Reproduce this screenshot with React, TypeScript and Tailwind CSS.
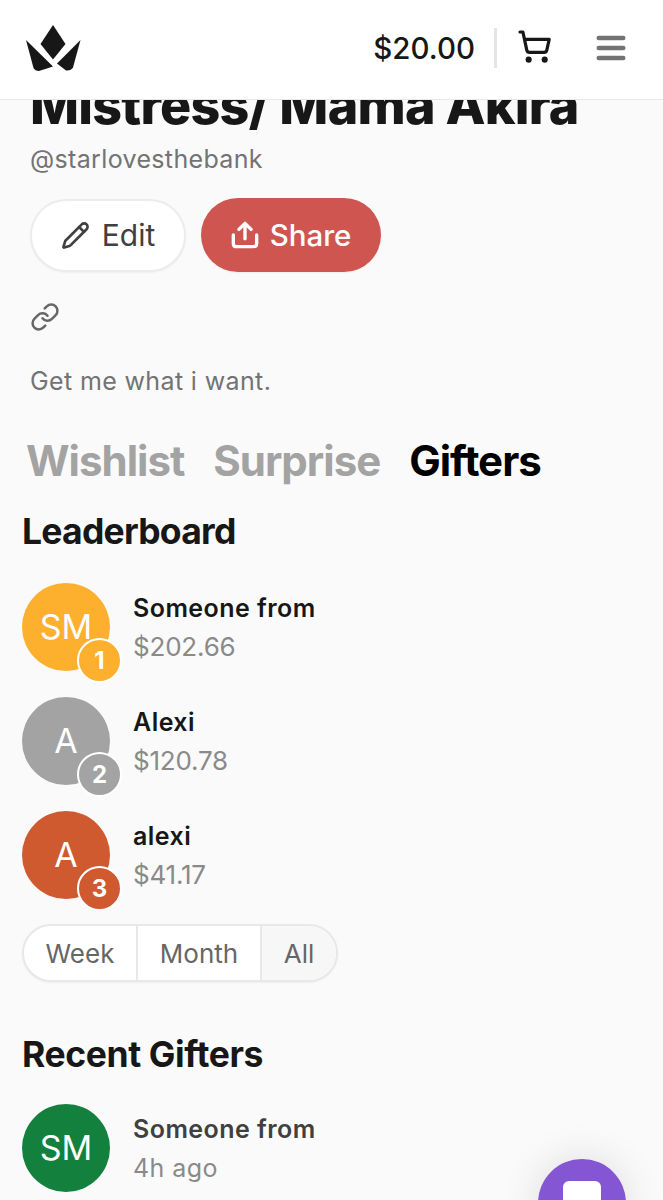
import { Link, Pencil, ShoppingCart } from "lucide-react";

const leaders = [
  { initials: "SM", name: "Someone from", amount: "$202.66", rank: 1, color: "bg-[#fdb02d]" },
  { initials: "A", name: "Alexi", amount: "$120.78", rank: 2, color: "bg-[#a3a3a3]" },
  { initials: "A", name: "alexi", amount: "$41.17", rank: 3, color: "bg-[#cf5a30]" },
];

function Avatar({ initials, color, rank }: { initials: string; color: string; rank?: number }) {
  return (
    <div className={`relative flex h-[88px] w-[88px] shrink-0 items-center justify-center rounded-full text-[34px] leading-none text-white ${color}`}>
      {initials}
      {rank ? (
        <div className={`absolute left-[55px] top-[55px] flex h-[45px] w-[45px] items-center justify-center rounded-full border-2 border-white text-[24px] font-bold ${color}`}>
          {rank}
        </div>
      ) : null}
    </div>
  );
}

export default function App() {
  return (
    <div className="relative h-[1200px] w-[663px] overflow-hidden bg-[#fafafa] font-['Inter',sans-serif]">
      <header className="relative z-10 flex h-[100px] items-center border-b border-[#e8e8e8] bg-white pl-[26px] pr-[37px]">
        <svg width="55" height="46" viewBox="26 25 55 46" fill="#171717" className="-mt-[4px]">
          <path d="M53 25 L65.5 44 L53 59.5 L40.5 44 Z" />
          <path d="M26 40 L53 66.5 L39 71 Q35 71 33.5 68 Z" />
          <path d="M80.5 40 L73 67.5 Q71 71 66 70.5 L57 63.5 Z" />
        </svg>
        <div className="-mt-[2px] ml-auto text-[29.5px] font-medium leading-none text-[#171717]">$20.00</div>
        <div className="-mt-[4px] ml-[19px] h-[40px] w-[3px] bg-[#e5e5e5]" />
        <ShoppingCart className="-mt-[7px] ml-[20px] text-[#171717]" size={35} strokeWidth={2.2} />
        <svg className="-mt-[3px] ml-[44px]" width="30" height="26" viewBox="0 0 30 26" fill="#737373">
          <rect x="0.5" y="0.75" width="29" height="4.5" rx="2.25" />
          <rect x="0.5" y="10.75" width="29" height="4.5" rx="2.25" />
          <rect x="0.5" y="20.75" width="29" height="4.5" rx="2.25" />
        </svg>
      </header>

      <main className="relative -mt-[26px]">
        <div className="px-[30px]">
          <h1 className="text-[52px] font-extrabold leading-[63px] tracking-[-0.75px] text-[#171717]">Mistress/ Mama Akira</h1>
          <p className="mt-[7px] text-[25px] leading-[30px] tracking-[0.35px] text-[#737373]">@starlovesthebank</p>
          <div className="mt-[24px] flex items-center gap-[15px]">
            <button className="flex h-[73px] w-[156px] items-center justify-center gap-[12px] rounded-full border-2 border-[#ececec] bg-white text-[30px] text-[#404040] shadow-xs">
              <Pencil size={29} strokeWidth={2.2} />
              Edit
            </button>
            <button className="flex h-[74px] w-[180px] items-center justify-center gap-[11px] rounded-full bg-[#cf5650] text-[29.5px] font-medium text-white shadow-xs">
              <svg width="28" height="28" viewBox="0 0 30 30" fill="none" stroke="currentColor" strokeWidth="3.6" strokeLinecap="round" strokeLinejoin="round">
                <path d="M15 19 V3 M8.5 9 L15 2.5 L21.5 9" />
                <path d="M2.5 15 V24 Q2.5 27.5 6 27.5 H24 Q27.5 27.5 27.5 24 V15" />
              </svg>
              Share
            </button>
          </div>
          <Link className="mt-[30px] text-[#666666]" size={30} strokeWidth={2} />
          <p className="mt-[34px] text-[25px] leading-[30px] tracking-[0.37px] text-[#737373]">Get me what i want.</p>
        </div>

        <div className="mt-[40px] flex gap-[29px] pl-[26px] text-[42px] font-bold leading-[50px] tracking-[-1px]">
          <span className="text-[#a3a3a3]">Wishlist</span>
          <span className="text-[#a3a3a3]">Surprise</span>
          <span className="text-black">Gifters</span>
        </div>

        <section className="px-[22px]">
          <h2 className="mt-[24px] text-[35.5px] font-bold leading-[44px] tracking-[-0.75px] text-[#171717]">Leaderboard</h2>
          <div className="mt-[29px] flex flex-col gap-[26px]">
            {leaders.map((l) => (
              <div key={l.rank} className="flex items-start gap-[23px]">
                <Avatar initials={l.initials} color={l.color} rank={l.rank} />
                <div className="pt-[8px]">
                  <div className="text-[25px] font-semibold leading-[34px] tracking-[0.45px] text-[#171717]">{l.name}</div>
                  <div className="mt-[5px] text-[26px] leading-[34px] tracking-[-0.2px] text-[#8a8a8a]">{l.amount}</div>
                </div>
              </div>
            ))}
          </div>

          <div className="mt-[25px] flex h-[58px] w-[316px] overflow-hidden rounded-full border-2 border-[#e8e8e8] bg-white text-[26px] text-[#666666] shadow-xs">
            <div className="flex w-[114px] items-center justify-center border-r-2 border-[#e8e8e8]">Week</div>
            <div className="flex w-[124px] items-center justify-center border-r-2 border-[#e8e8e8]">Month</div>
            <div className="flex flex-1 items-center justify-center bg-[#f7f7f7]">All</div>
          </div>

          <h2 className="mt-[51px] text-[35.5px] font-bold leading-[44px] tracking-[-0.4px] text-[#171717]">Recent Gifters</h2>
          <div className="mt-[27px] flex items-start gap-[23px]">
            <Avatar initials="SM" color="bg-[#13813d]" />
            <div className="pt-[8px]">
              <div className="text-[25px] font-semibold leading-[34px] tracking-[0.45px] text-[#404040]">Someone from</div>
              <div className="mt-[5px] text-[25px] leading-[34px] tracking-[0.45px] text-[#8a8a8a]">4h ago</div>
            </div>
          </div>
        </section>
      </main>

      <div className="absolute left-[538px] top-[1159px] flex h-[88px] w-[88px] justify-center rounded-full bg-[#8556d3] pt-[22px] shadow-[0_0_40px_rgba(0,0,0,0.12)]">
        <div className="h-[40px] w-[38px] rounded-[6px] bg-white" />
      </div>
    </div>
  );
}
